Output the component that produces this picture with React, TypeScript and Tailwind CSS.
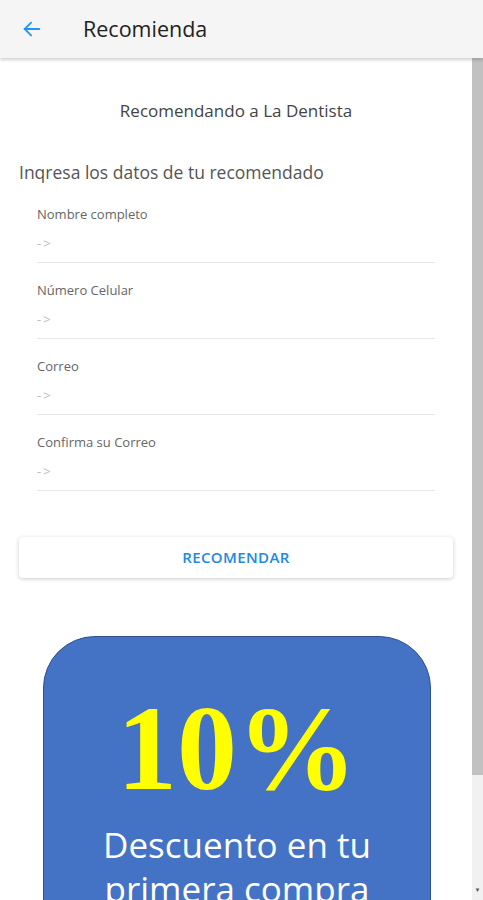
import React from 'react';

const fields = ['Nombre completo', 'Número Celular', 'Correo', 'Confirma su Correo'];

export default function App() {
  return (
    <div className="h-[900px] w-[483px] overflow-hidden bg-white flex flex-col font-['Open_Sans','Noto_Sans',sans-serif]">
      {/* barra superior */}
      <div className="h-[58px] shrink-0 bg-[#f5f5f5] flex items-center shadow-[0_2px_3px_rgba(0,0,0,0.18)] relative z-10">
        <svg className="ml-[21px] w-[22px] h-[22px]" viewBox="0 0 24 24" fill="none" stroke="#2196f3" strokeWidth="2" strokeLinecap="round">
          <path d="M20 12H4" />
          <path d="M11 5l-7 7 7 7" />
        </svg>
        <h1 className="ml-[40px] text-[21.5px] text-[#222] leading-none">Recomienda</h1>
      </div>

      <div className="flex flex-1 min-h-0">
        {/* contenido */}
        <div className="flex-1 min-w-0">
          <p className="mt-[40px] text-center text-[17px] text-[#444]">Recomendando a La Dentista</p>
          <p className="mt-[35px] ml-[19px] text-[17.5px] text-[#555]">Inqresa los datos de tu recomendado</p>

          <div className="mt-[20px] mx-[37px] flex flex-col gap-[18px]">
            {fields.map((f) => (
              <div key={f} className="border-b border-[#e6e6e6] pb-[10px]">
                <p className="text-[13px] text-[#666] leading-[18px]">{f}</p>
                <p className="mt-[11px] text-[13px] text-[#bbb] leading-[18px] tracking-[2px]">-&gt;</p>
              </div>
            ))}
          </div>

          <div className="mt-[46px] mx-[19px] h-[41px] rounded bg-white shadow-[0_1px_4px_rgba(0,0,0,0.2)] flex items-center justify-center">
            <span className="text-[15px] font-semibold text-[#2188e6] tracking-wide">RECOMENDAR</span>
          </div>

          {/* banner de descuento */}
          <div className="mt-[58px] ml-[43px] mr-[41px] h-[400px] rounded-[52px] bg-[#4472c4] border border-[#2f528f] flex flex-col items-center">
            <p className="mt-[52px] text-[120px] leading-none font-bold text-[#ffff00] font-['Liberation_Serif',serif]">10%</p>
            <p className="mt-[14px] text-[35px] text-white text-center leading-[44px]">
              Descuento en tu<br />primera compra
            </p>
          </div>
        </div>

        {/* barra de desplazamiento */}
        <div className="w-[11px] shrink-0 bg-[#f1f1f1] flex flex-col">
          <div className="h-[717px] bg-[#c1c1c1]" />
          <div className="flex-1" />
          <div className="h-[14px] flex items-start justify-center text-[6px] text-[#555]">▼</div>
        </div>
      </div>
    </div>
  );
}
